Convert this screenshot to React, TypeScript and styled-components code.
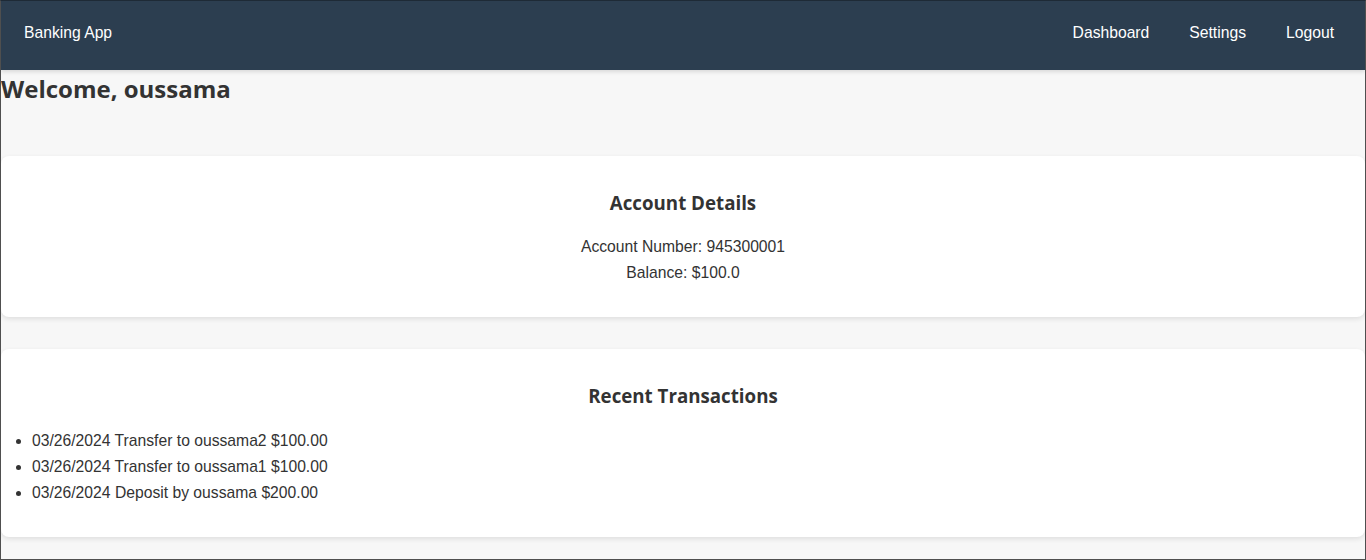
import styled, { createGlobalStyle } from "styled-components";

const GlobalStyle = createGlobalStyle`
  html, body {
    margin: 0;
    padding: 0;
    background: #f7f7f7;
  }
  body {
    font-family: "Liberation Sans", Arial, sans-serif;
    color: #333;
  }
`;

const transactions = [
  { date: "03/26/2024", text: "Transfer to oussama2", amount: "$100.00" },
  { date: "03/26/2024", text: "Transfer to oussama1", amount: "$100.00" },
  { date: "03/26/2024", text: "Deposit by oussama", amount: "$200.00" },
];

const App = () => {
  return (
    <>
      <GlobalStyle />
      <Frame>
        <Header>
          <Brand>Banking App</Brand>
          <Nav>
            <NavLink>Dashboard</NavLink>
            <NavLink>Settings</NavLink>
            <NavLink>Logout</NavLink>
          </Nav>
        </Header>

        <Main>
          <Welcome>Welcome, oussama</Welcome>

          <Card>
            <CardTitle>Account Details</CardTitle>
            <Line>Account Number: 945300001</Line>
            <Line>Balance: $100.0</Line>
          </Card>

          <Card>
            <CardTitle $gap={17}>Recent Transactions</CardTitle>
            <TxList>
              {transactions.map((t, i) => (
                <TxItem key={i}>
                  {t.date} {t.text} {t.amount}
                </TxItem>
              ))}
            </TxList>
          </Card>
        </Main>
      </Frame>
    </>
  );
};

export default App;

const Frame = styled.div`
  box-sizing: border-box;
  height: 560px;
  border: 1px solid #4f4f4f;
  border-top-color: #1e2a36;
  background: #f7f7f7;
  overflow: hidden;
`;

const Header = styled.header`
  position: relative;
  z-index: 1;
  box-sizing: border-box;
  height: 69px;
  display: flex;
  align-items: flex-start;
  justify-content: space-between;
  padding: 23px 31px 0 23px;
  background: #2c3e50;
  color: #fff;
  font-size: 15.7px;
  line-height: 18px;
  box-shadow: 0 2px 4px rgba(0, 0, 0, 0.12);
`;

const Brand = styled.div``;

const Nav = styled.nav`
  display: flex;
  gap: 40px;
`;

const NavLink = styled.a`
  color: #fff;
  text-decoration: none;
  cursor: pointer;
`;

const Main = styled.main`
  display: flex;
  flex-direction: column;
  gap: 32px;
`;

const Welcome = styled.h1`
  margin: 0 0 16px 0;
  font-family: "Open Sans", sans-serif;
  font-weight: 700;
  font-size: 24px;
  line-height: 38px;
`;

const Card = styled.section`
  background: #fff;
  border-radius: 8px;
  box-shadow: 0 2px 5px rgba(0, 0, 0, 0.1);
  padding: 32px 0 31px;
  text-align: center;
`;

const CardTitle = styled.h3<{ $gap?: number }>`
  margin: 0 0 ${({ $gap }) => $gap ?? 16}px 0;
  font-family: "Open Sans", sans-serif;
  font-weight: 700;
  font-size: 18.72px;
  line-height: 30px;
`;

const Line = styled.p`
  margin: 0;
  font-size: 15.7px;
  line-height: 26px;
`;

const TxList = styled.ul`
  margin: 0;
  padding-left: 31px;
  text-align: left;
`;

const TxItem = styled.li`
  font-size: 15.7px;
  line-height: 26px;
`;
